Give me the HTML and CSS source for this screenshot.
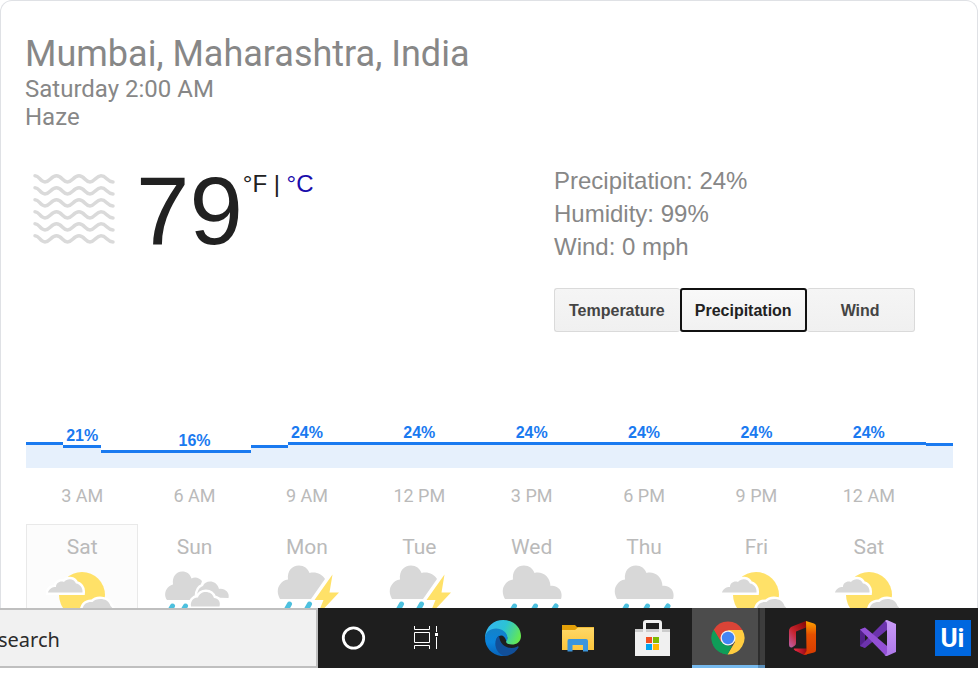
FILE: index.html
```html
<!DOCTYPE html>
<html lang="en">
<head>
<meta charset="utf-8">
<title>Weather</title>
<link rel="stylesheet" href="styles.css">
</head>
<body>
<svg class="defs" width="0" height="0" aria-hidden="true">
  <defs>
    <symbol id="cloudy-moon" viewBox="0 0 72 72">
      <circle cx="36" cy="35" r="23" fill="#ffe168"/>
      <path class="halo" d="M2 32.500C3 29 6 27 10 27C10 23 14 20.500 18 22C21 18 28 18 30 23.500C34 24 37 28 36.500 32.500Z"/>
      <path class="cloud" d="M2 32.500C3 29 6 27 10 27C10 23 14 20.500 18 22C21 18 28 18 30 23.500C34 24 37 28 36.500 32.500Z"/>
      <path class="halo" d="M36 53C36 46 39 41.500 46.500 42C50 38 62 37 64.500 46C68 49 67 52 66 53Z"/>
      <path class="cloud" d="M36 53C36 46 39 41.500 46.500 42C50 38 62 37 64.500 46C68 49 67 52 66 53Z"/>
    </symbol>
    <symbol id="showers" viewBox="0 0 72 72">
      <path class="cloud" d="M8 40C5 36 6 31 8.500 28C10 26 12 25 14 24.500C13 17 17 11.500 23 11.500C28 11.500 31 14 32.500 18.500C36 16.500 40 17.500 43 21L37 40Z"/>
      <path class="halo" d="M38 37C38 30 41 27 44 26C46 19.500 58 19.500 60 29C66 28 71 33 69.500 38Z"/>
      <path class="cloud" d="M38 37C38 30 41 27 44 26C46 19.500 58 19.500 60 29C66 28 71 33 69.500 38Z"/>
      <path class="halo" d="M32 46.500C31 41 35 37 39 37.500C41 30 53 30 55 38C59 38 62 42 60.500 46.500Z"/>
      <path class="cloud" d="M32 46.500C31 41 35 37 39 37.500C41 30 53 30 55 38C59 38 62 42 60.500 46.500Z"/>
      <path class="rain" d="M13.500 46L10 52M26.500 46L23 52"/>
    </symbol>
    <symbol id="storm" viewBox="0 0 72 72">
      <path class="cloud" d="M9 39C6 34 6 28 9 24.500C11 21.500 13.500 20 17 19.500C16 11 21 5.500 28 5.500C33 5.500 37 8.500 38.500 13C45 11.500 51 14 54 19L40 39Z"/>
      <path d="M61.500 14.500L43.500 40H52.500L46 56L68 32.500H58.500Z" fill="#ffe168"/>
      <path class="rain" d="M18.500 44L14 52M38.500 44L34 52"/>
    </symbol>
    <symbol id="rainy" viewBox="0 0 72 72">
      <path class="cloud" d="M9 39C6 34 6 28 9 24.500C11 21.500 13.500 20 17 19.500C16 11 21 5.500 28 5.500C33 5.500 37 8.500 38.500 13C46 11 54 16 54.500 26C60 25 65 29 65.500 34C65.700 36 65.500 38 65 39Z"/>
      <path class="rain" d="M18.500 46L15 52M39.500 46L36 52M60 46L56 52"/>
    </symbol>
  </defs>
</svg>

<main class="card">
  <header>
    <h1 class="place">Mumbai, Maharashtra, India</h1>
    <p class="line">Saturday 2:00 AM</p>
    <p class="line">Haze</p>
  </header>

  <section class="now">
    <div class="reading">
      <svg class="haze" width="96" height="96" viewBox="0 0 96 96" role="img" aria-label="Haze">
        <defs><path id="wave" d="M9 15.800C13.500 15.800 14 21.900 19 21.900C24 21.900 25 15.800 30.500 15.800C36 15.800 36.500 21.900 41.500 21.900C46.500 21.900 47.500 15.800 53 15.800C58.500 15.800 59 21.900 64 21.900C69 21.900 70 15.800 75 15.800C80.500 15.800 81 21.900 87 21.900" fill="none" stroke="#dadada" stroke-width="3.500" stroke-linecap="round"/></defs>
        <use href="#wave"/><use href="#wave" y="12"/><use href="#wave" y="24"/><use href="#wave" y="36"/><use href="#wave" y="48"/><use href="#wave" y="60"/>
      </svg>
      <span class="temp">79</span>
      <span class="units">°F | <a href="#celsius">°C</a></span>
    </div>
    <div class="details">
      <p>Precipitation: 24%</p>
      <p>Humidity: 99%</p>
      <p>Wind: 0 mph</p>
      <div class="tabs">
        <button type="button" class="tab">Temperature</button>
        <button type="button" class="tab selected">Precipitation</button>
        <button type="button" class="tab wind">Wind</button>
      </div>
    </div>
  </section>

  <section class="chart">
    <div class="bars">
      <i style="flex-grow:37;height:26px"></i>
      <i style="flex-grow:38;height:23px"></i>
      <i style="flex-grow:150;height:18px"></i>
      <i style="flex-grow:37;height:23px"></i>
      <i style="flex-grow:638;height:26px"></i>
      <i style="flex-grow:27;height:25px"></i>
    </div>
    <div class="columns values">
      <span style="padding-bottom:23px">21%</span>
      <span style="padding-bottom:18px">16%</span>
      <span style="padding-bottom:26px">24%</span>
      <span style="padding-bottom:26px">24%</span>
      <span style="padding-bottom:26px">24%</span>
      <span style="padding-bottom:26px">24%</span>
      <span style="padding-bottom:26px">24%</span>
      <span style="padding-bottom:26px">24%</span>
    </div>
  </section>
  <div class="columns hours">
    <span>3 AM</span><span>6 AM</span><span>9 AM</span><span>12 PM</span><span>3 PM</span><span>6 PM</span><span>9 PM</span><span>12 AM</span>
  </div>

  <section class="columns days">
    <div class="day current">Sat<svg><use href="#cloudy-moon"/></svg></div>
    <div class="day">Sun<svg><use href="#showers"/></svg></div>
    <div class="day">Mon<svg><use href="#storm"/></svg></div>
    <div class="day">Tue<svg><use href="#storm"/></svg></div>
    <div class="day">Wed<svg><use href="#rainy"/></svg></div>
    <div class="day">Thu<svg><use href="#rainy"/></svg></div>
    <div class="day">Fri<svg><use href="#cloudy-moon"/></svg></div>
    <div class="day">Sat<svg><use href="#cloudy-moon"/></svg></div>
  </section>
</main>

<nav class="taskbar">
  <input class="search" type="text" value="search" aria-label="Search">
  <div class="apps">
    <button type="button" class="app" aria-label="Cortana">
      <svg viewBox="0 0 36 36"><circle cx="18.500" cy="18" r="10.200" fill="none" stroke="#fff" stroke-width="2.800"/></svg>
    </button>
    <button type="button" class="app" aria-label="Task view">
      <svg viewBox="0 0 36 36" fill="none" stroke="#fff"><path d="M4.500 6V9.500H19.500V6M4.500 12.500H19.500V22.500H4.500ZM4.500 29V25.500H19.500V29M26.500 6V12M26.500 17V29"/><path d="M25 13H28V16H25Z" fill="#fff" stroke="none"/></svg>
    </button>
    <button type="button" class="app" aria-label="Edge">
      <svg viewBox="0 0 36 36">
        <defs>
          <linearGradient id="e1" x1="0" y1=".3" x2="1" y2=".6"><stop offset="0" stop-color="#35b5f0"/><stop offset=".5" stop-color="#2cc3d5"/><stop offset="1" stop-color="#65e94f"/></linearGradient>
          <linearGradient id="e2" x1="0" y1="0" x2="0" y2="1"><stop offset="0" stop-color="#1482c8"/><stop offset=".5" stop-color="#0a84dc"/><stop offset="1" stop-color="#0863ba"/></linearGradient>
        </defs>
        <path d="M0 17C1 6 9 0 18 0C29 0 36 8 36 16C36 22 31.500 24.500 27 24.500C23 24.500 20.500 23 21.300 21C24 17 21 12 14 10Z" fill="url(#e1)"/>
        <path d="M0 18C.5 12 5 8.500 11 8.500C17 8.500 22.500 12.500 22.500 18C22.500 19.500 22 20.500 21.300 21C20 15 15 13.500 12 18C9 25 14 34 23 35C20 36 18 36 16 36C7 35 0 27.500 0 18Z" fill="url(#e2)"/>
        <path d="M14 15.500C8 20 9 32 19 36C26 36 31 32 33.500 27.500C34 26.500 33 26 32 26.700C25 30 15 27 14 15.500Z" fill="#114f99"/>
      </svg>
    </button>
    <button type="button" class="app" aria-label="File Explorer">
      <svg viewBox="0 0 36 36">
        <defs><linearGradient id="f1" x1="0" y1="0" x2="0" y2="1"><stop offset="0" stop-color="#ffd867"/><stop offset="1" stop-color="#fcc53c"/></linearGradient></defs>
        <path d="M2 5H15L17 7H34V12H2Z" fill="#e3a008"/>
        <path d="M2 10H15L18 7.500H34V30H2Z" fill="url(#f1)"/>
        <path d="M9 19H26Q28 19 28 21V31.500H23V25H12.500V31.500H7.500V21Q7.500 19 9 19Z" fill="#3a95dc"/>
      </svg>
    </button>
    <button type="button" class="app" aria-label="Store">
      <svg viewBox="0 0 36 36">
        <path d="M0 9H35V13H0Z" fill="#ccc"/>
        <path d="M0 12H35V36H0Z" fill="#f0f0f0"/>
        <path d="M9.500 12V3Q9.500 1.500 11 1.500H24Q25.500 1.500 25.500 3V12" fill="none" stroke="#f0f0f0" stroke-width="3"/>
        <path d="M11 17H17V23H11Z" fill="#f25022"/><path d="M18 17H24V23H18Z" fill="#7fba00"/><path d="M11 24H17V30H11Z" fill="#00a4ef"/><path d="M18 24H24V30H18Z" fill="#ffb900"/>
      </svg>
    </button>
    <button type="button" class="app active" aria-label="Chrome">
      <svg viewBox="0 0 36 36">
        <path d="M18 18L3.700 9.700A16.500 16.500 0 0 1 32.300 9.700Z" fill="#db4437"/>
        <path d="M18 18L17.500 34.500A16.500 16.500 0 0 1 3.700 9.700Z" fill="#0f9d58"/>
        <path d="M17.500 34.500L25 22L18 10H32.400A16.500 16.500 0 0 1 17.500 34.500Z" fill="#ffcd40"/>
        <path d="M3.700 9.700L11 22L18 18V10H32.400Z" fill="#db4437"/>
        <path d="M3.700 9.700L11 22Q14 27 18 25.500L22 26L17.500 34.500A16.500 16.500 0 0 1 3.700 9.700Z" fill="#0f9d58"/>
        <circle cx="18" cy="18" r="7.500" fill="#f1f1f1"/><circle cx="18" cy="18" r="6.200" fill="#4285f4"/>
      </svg>
    </button>
    <button type="button" class="app" aria-label="Office">
      <svg viewBox="0 0 36 36">
        <defs>
          <linearGradient id="o1" x1="0" y1="0" x2="0" y2="1"><stop offset="0" stop-color="#ffa400"/><stop offset=".4" stop-color="#e55000"/><stop offset="1" stop-color="#d83b01"/></linearGradient>
          <linearGradient id="o2" x1=".8" y1="0" x2="0" y2="1"><stop offset="0" stop-color="#8b0b0b"/><stop offset=".5" stop-color="#c9232d"/><stop offset="1" stop-color="#bd63ad"/></linearGradient>
          <linearGradient id="o3"><stop offset="0" stop-color="#ee2b45"/><stop offset="1" stop-color="#920913"/></linearGradient>
        </defs>
        <path d="M21 1L7 6.500Q4 8 4 11V24Q4 28 7 27.500L10 25.500Q11 24.500 11 23V11.500L21 7.500Z" fill="url(#o2)"/>
        <path d="M9 28.500H22V35H19L10 30.500Q8 29 9 28.500Z" fill="url(#o3)"/>
        <path d="M21 1L29 3.500Q31 4.200 31 6V30Q31 32 29 32.500L19 35L21.500 31Z" fill="url(#o1)"/>
      </svg>
    </button>
    <button type="button" class="app" aria-label="Visual Studio">
      <svg viewBox="0 0 36 36">
        <defs><linearGradient id="v1" x1="0" y1="0" x2="0" y2="1"><stop offset="0" stop-color="#ca9bf8"/><stop offset="1" stop-color="#ae78e9"/></linearGradient></defs>
        <path d="M0 9.500L5 7.500V28L0 26Z" fill="#52218a"/>
        <path d="M0 26L25 1L27 0V10L5 28Z" fill="#6c33ad"/>
        <path d="M0 9.500L5 7.500L27 26V36L25 35Z" fill="#9350d5"/>
        <path d="M27 0L36 4V32L27 36Q25 36 24.500 35Q27 35 27 32V4Q27 2 25 1Q26 0 27 0Z" fill="url(#v1)"/>
      </svg>
    </button>
    <button type="button" class="app"><span class="uipath">Ui</span></button>
  </div>
</nav>
</body>
</html>
```

FILE: styles.css
```css
* {
  box-sizing: border-box;
}

body {
  margin: 0;
  height: 100vh;
  padding-bottom: 31px;
  display: flex;
  flex-direction: column;
  overflow: hidden;
  background: #fff;
  font-family: Roboto, sans-serif;
  color: #878787;
}

p,
h1 {
  margin: 0;
}

.defs {
  position: absolute;
}

.card {
  flex: 1;
  min-height: 0;
  overflow: hidden;
  padding: 32px 24px 0;
  border: 1px solid #dfe1e5;
  border-bottom: 0;
  border-radius: 12px 12px 0 0;
}

.chart,
.hours,
.days,
.now {
  margin-left: 1px;
}

.place {
  font-size: 36px;
  line-height: 42px;
  font-weight: 400;
}

.line {
  font-size: 24px;
  line-height: 28px;
}

.now {
  display: grid;
  grid-template-columns: 4fr 3fr;
  padding-top: 26px;
  margin-right: 3px;
  font-family: "Liberation Sans", Arial, sans-serif;
}

.reading {
  display: flex;
  color: #212121;
}

.haze {
  margin-top: 3px;
}

.temp {
  margin-left: 14px;
  font-size: 96px;
  line-height: 108px;
}

.units {
  margin-top: 13px;
  font-size: 24px;
  line-height: 28px;
}

.units a {
  color: #1a0dab;
  text-decoration: none;
}

.details {
  justify-self: start;
  padding-top: 7px;
  font-size: 24px;
  line-height: 33px;
  white-space: nowrap;
}

.tabs {
  display: flex;
  margin-top: 25px;
}

.tab {
  height: 44px;
  padding: 2px 15px 0 14px;
  border: 1px solid #dadada;
  border-radius: 3px;
  background: linear-gradient(#f5f5f5, #f0f0f0);
  color: #444;
  font: bold 16px "Liberation Sans", Arial, sans-serif;
}

.tab:first-child {
  border-right: 0;
}

.tab.selected {
  border: 2px solid #111;
  background: linear-gradient(#f9f9f9, #f1f1f1);
  color: #222;
  padding: 2px 13px 0;
}

.tab.wind {
  padding: 2px 34px 0;
  border-left: 0;
}

.chart {
  display: grid;
  margin-top: 86px;
}

.bars,
.values {
  grid-area: 1 / 1;
  align-items: flex-end;
}

.bars {
  display: flex;
}

.bars i {
  flex-basis: 0;
  border-top: 3px solid #1a7af0;
  background: #e6f0fc;
}

.columns {
  display: grid;
  grid-template-columns: repeat(8, 1fr);
  padding-right: 28px;
  text-align: center;
}

.values {
  min-height: 50px;
  color: #1a7af0;
  font: bold 16px/18px "Liberation Sans", Arial, sans-serif;
}

.hours {
  margin-top: 17px;
  font-size: 18px;
  line-height: 22px;
  color: #bababa;
}

.days {
  margin-top: 17px;
  font-size: 21px;
  line-height: 24px;
  color: #bababa;
}

.day {
  height: 130px;
  padding-top: 10px;
  border: 1px solid transparent;
}

.day.current {
  border-color: #e9e9e9;
  background: #fcfcfc;
}

.day svg {
  display: block;
  width: 72px;
  height: 72px;
  margin: 1px auto 0;
}

.cloud {
  fill: #d8d8d8;
}

.halo {
  fill: #fff;
  stroke: #fff;
  stroke-width: 5;
}

.rain {
  fill: none;
  stroke: #4dc0de;
  stroke-width: 5;
  stroke-linecap: round;
}

.taskbar {
  flex: none;
  display: flex;
  height: 60px;
  overflow: hidden;
  background: #1e1e1e;
}

.search {
  flex: none;
  width: 326px;
  margin-left: -8px;
  padding: 3px 4px 0;
  border: 2px solid #bfbfbf;
  background: #f1f1f1;
  color: #2b2b2b;
  font: 20px "Noto Sans", "Open Sans", sans-serif;
}

.apps {
  display: flex;
  margin-left: -3px;
}

.app {
  flex: none;
  display: grid;
  place-items: center;
  width: 75px;
  padding: 0;
  border: 0;
  background: none;
}

.app svg {
  width: 36px;
  height: 36px;
}

.app.active {
  background:
    linear-gradient(#76b9ed, #76b9ed) 2px 100% / 66px 3px no-repeat,
    linear-gradient(#5a90bc, #5a90bc) 2px 100% / 73px 3px no-repeat,
    linear-gradient(90deg, #1e1e1e 2px, #4c4c4c 2px, #4c4c4c 68px, #2d2d2d 68px, #2d2d2d 70px, #3d3d3d 70px);
}

.uipath {
  width: 36px;
  background: #0067df;
  color: #fff;
  font: bold 26px/36px Roboto, sans-serif;
}
```
